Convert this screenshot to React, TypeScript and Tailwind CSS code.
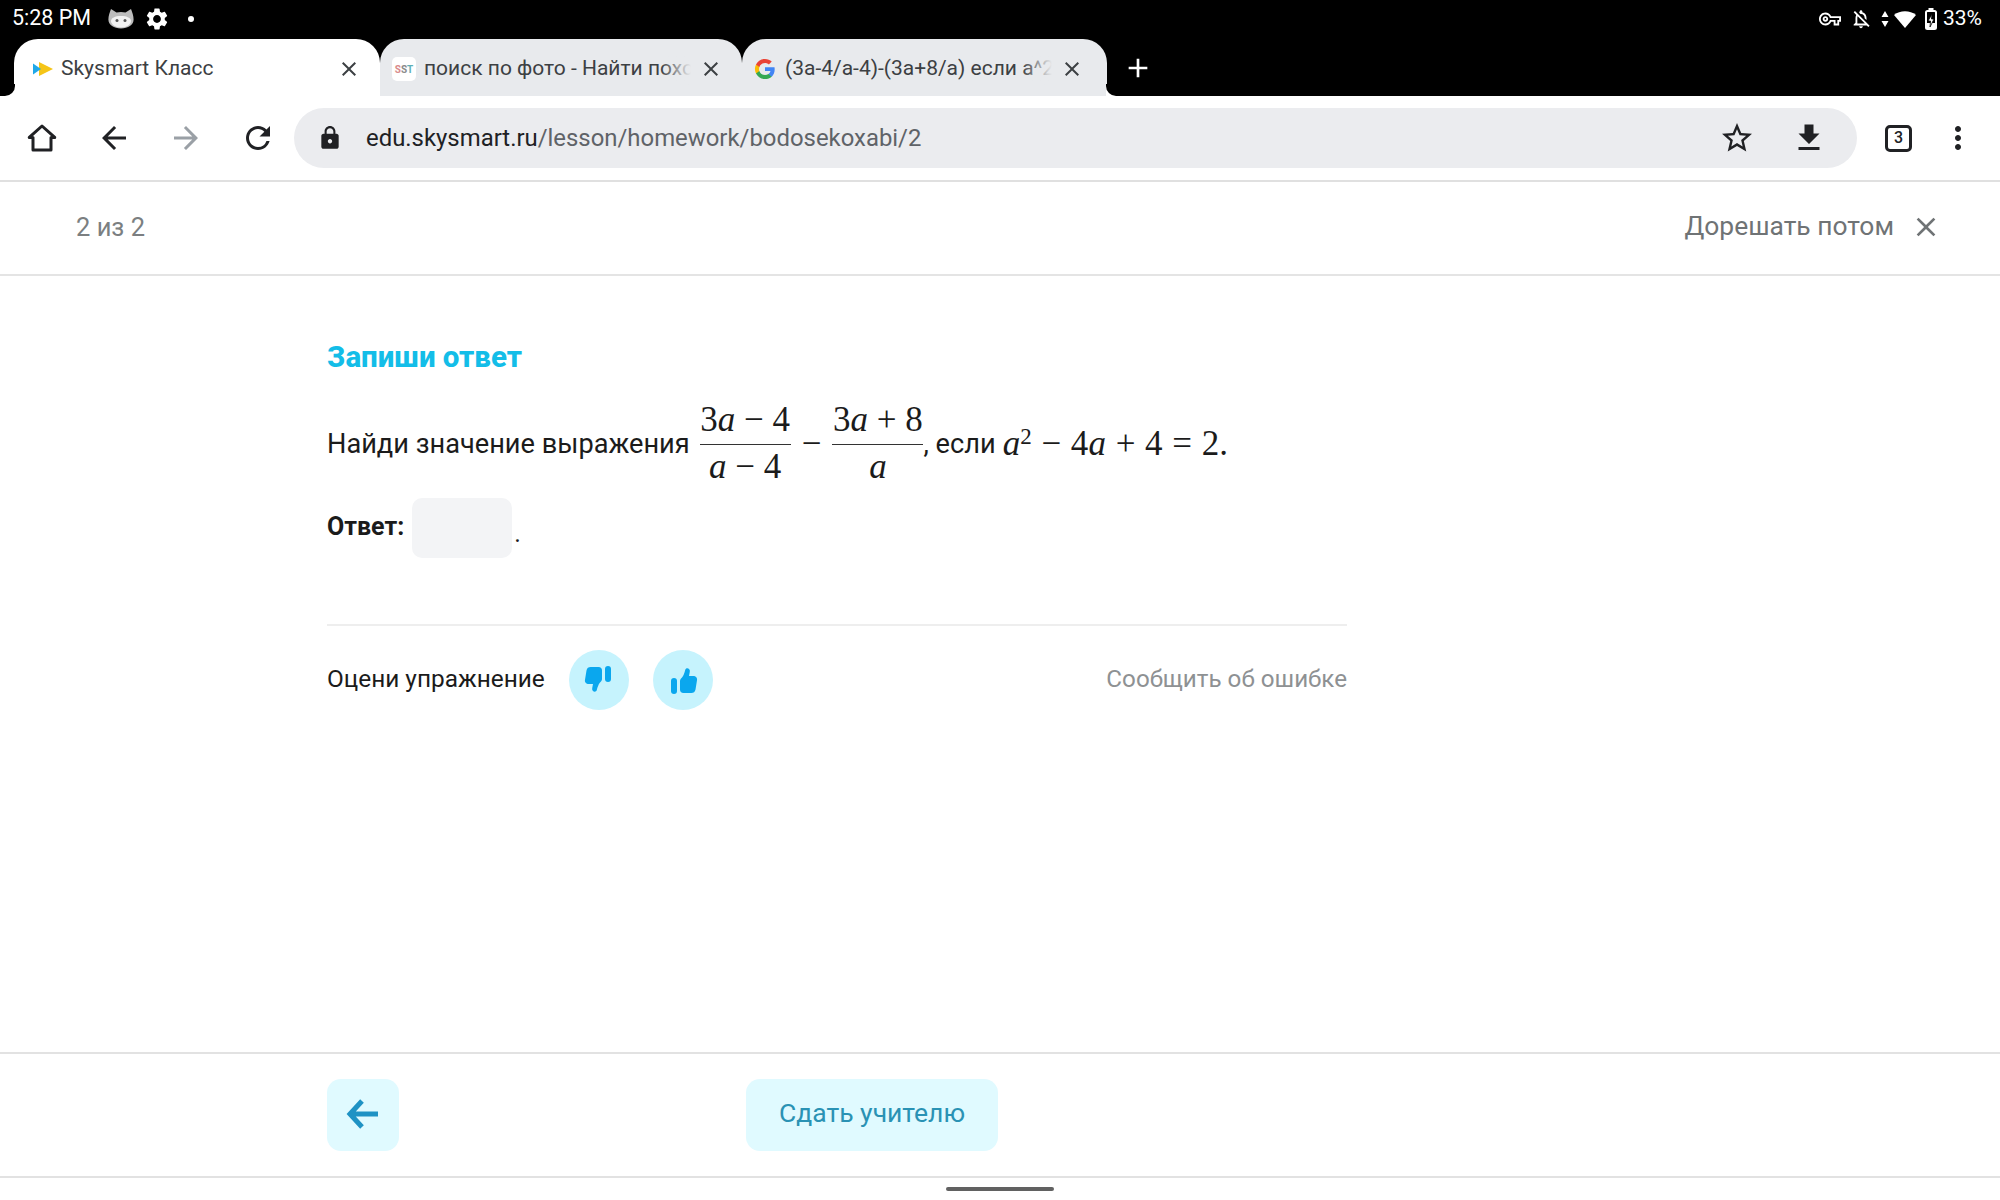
import React from "react";
import {
  MdSettings,
  MdOutlineVpnKey,
  MdOutlineNotificationsOff,
  MdClose,
  MdAdd,
  MdArrowBack,
  MdArrowForward,
  MdRefresh,
  MdLock,
  MdStarBorder,
  MdFileDownload,
  MdMoreVert,
} from "react-icons/md";

const sans = "font-['Roboto',sans-serif]";
const math = "font-['Liberation_Serif',serif]";

function Frac({ top, bottom, w }: { top: React.ReactNode; bottom: React.ReactNode; w: string }) {
  return (
    <span className={`inline-flex flex-col items-center ${w} ${math} text-[35px] leading-[44px] text-[#1b1b1b]`}>
      <span className="h-[44px] leading-[40px] whitespace-nowrap">{top}</span>
      <span className="w-full border-t border-[#333] h-0" />
      <span className="h-[44px] whitespace-nowrap">{bottom}</span>
    </span>
  );
}

const A = () => <i>a</i>;

function Thumb({ down }: { down?: boolean }) {
  return (
    <svg width="30" height="30" viewBox="0 0 30 30" fill="#0aa7ee" className={down ? "rotate-180" : ""}>
      <rect x="3" y="13" width="6" height="16" rx="3" />
      <path d="M12 16c0-1.500 1-2.500 2-3.500 1.600-2 2.400-4.500 3.200-7.500.6-2.800 5.300-2 4.600 1.800l-.8 4.200h4c3 0 4.500 2 4 4.300l-1.500 9.200c-.4 2.500-2 3.500-4.200 3.500H15.500c-2.300 0-3.500-1.200-3.500-3.500z" />
    </svg>
  );
}

function Flare({ side }: { side: "left" | "right" }) {
  return (
    <span
      className={`absolute bottom-0 w-[10px] h-[12px] bg-white ${side === "left" ? "left-[-9px]" : "right-[-9px]"}`}
    >
      <span
        className={`block w-full h-full bg-black ${side === "left" ? "rounded-br-[10px]" : "rounded-bl-[10px]"}`}
      />
    </span>
  );
}

function Tab({
  active,
  title,
  icon,
  width,
  pad,
  flare,
}: {
  active?: boolean;
  title: string;
  icon: React.ReactNode;
  width: string;
  pad: string;
  flare?: React.ReactNode;
}) {
  return (
    <div
      className={`relative flex items-center pt-[3px] h-[57px] ${width} ${pad} rounded-t-[24px] ${
        active ? "bg-white" : "bg-[#e8eaed]"
      }`}
    >
      {flare}
      <span className="w-[26px] h-[26px] shrink-0 flex items-center justify-center">{icon}</span>
      <span
        className={`relative flex-1 min-w-0 overflow-hidden whitespace-nowrap ${
          active ? "ml-[5px]" : "ml-[7px]"
        } text-[21px] text-[#3c4043]`}
      >
        {title}
        {!active && (
          <span className="absolute right-0 top-0 bottom-0 w-[30px] bg-gradient-to-r from-transparent to-[#e8eaed]" />
        )}
      </span>
      <MdClose className="shrink-0 ml-[8px] text-[#3c4043]" size={24} />
    </div>
  );
}

export default function App() {
  return (
    <div className={`w-[2000px] h-[1200px] bg-white flex flex-col overflow-hidden ${sans}`}>
      {/* status bar */}
      <div className="h-[39px] bg-black flex items-center justify-between pb-[2px] pl-[12px] pr-[18px] text-white shrink-0">
        <div className="flex items-center">
          <span className="text-[21.5px] font-normal">5:28 PM</span>
          <svg className="ml-[17px]" width="26" height="20" viewBox="0 0 26 20">
            <path d="M3 0l5.500 3.500c3-.8 6-.8 9 0L23 0c1.200 3 2.600 7 2.600 10.500 0 5.500-5.600 9-12.600 9S.4 16 .4 10.500C.4 7 1.800 3 3 0z" fill="#bdbdbd" />
            <path d="M3 12c0-3 4-5 10-5s10 2 10 5-4 6.500-10 6.500S3 15 3 12z" fill="#f2f2f2" />
            <circle cx="9" cy="11.500" r="1.500" fill="#555" />
            <circle cx="17" cy="11.500" r="1.500" fill="#555" />
          </svg>
          <MdSettings className="ml-[10px]" size={26} />
          <span className="ml-[18px] w-[6px] h-[6px] rounded-full bg-white" />
        </div>
        <div className="flex items-center">
          <MdOutlineVpnKey size={22} />
          <MdOutlineNotificationsOff className="ml-[9px]" size={22} />
          <svg className="ml-[9px]" width="8" height="20" viewBox="0 0 8 20">
            <path d="M4 2l3.500 6H.5zM4 18L.5 12h7z" fill="#fff" />
          </svg>
          <svg className="ml-[4px]" width="24" height="20" viewBox="0 0 24 20">
            <path d="M12 19L1 6c6-5 16-5 22 0z" fill="#fff" />
          </svg>
          <svg className="ml-[8px]" width="12" height="22" viewBox="0 0 12 22">
            <rect x="1" y="3" width="10" height="18" rx="1.500" fill="#000" stroke="#fff" strokeWidth="2" />
            <rect x="3.500" y="0" width="5" height="3" fill="#fff" />
            <path d="M1 15h10v6H1z" fill="#fff" />
            <path d="M7 6L3 13h2.500L5 19l4-8H6.500z" fill="#fff" stroke="#000" strokeWidth=".8" />
          </svg>
          <span className="ml-[6px] text-[21px]">33%</span>
        </div>
      </div>

      {/* tabs */}
      <div className="h-[57px] bg-black flex items-end pl-[14px] shrink-0">
        <Tab
          active
          width="w-[366px]"
          pad="pl-[16px] pr-[19px]"
          flare={<Flare side="left" />}
          title="Skysmart Класс"
          icon={
            <svg width="20" height="14" viewBox="0 0 20 14">
              <path d="M6 0l14 7-14 7z" fill="#f5c518" />
              <path d="M0 1.500l8 5.500-8 5.500z" fill="#1fa8e8" />
            </svg>
          }
        />
        <Tab
          width="w-[362px]"
          pad="pl-[11px] pr-[19px]"
          title="поиск по фото - Найти похо"
          icon={
            <span className="w-[24px] h-[24px] bg-white rounded-[5px] flex items-center justify-center text-[10px] font-bold">
              <span className="text-[#d98b8b]">S</span>
              <span className="text-[#8a8a8a]">S</span>
              <span className="text-[#5fb0b7]">T</span>
            </span>
          }
        />
        <Tab
          width="w-[365px]"
          pad="pl-[10px] pr-[23px]"
          flare={<Flare side="right" />}
          title="(3a-4/a-4)-(3a+8/a) если a^2"
          icon={
            <svg width="22" height="22" viewBox="0 0 24 24">
              <path fill="#4285F4" d="M22.560 12.250c0-.78-.07-1.530-.2-2.250H12v4.260h5.920c-.26 1.370-1.040 2.530-2.210 3.310v2.770h3.570c2.080-1.920 3.280-4.740 3.280-8.090z" />
              <path fill="#34A853" d="M12 23c2.970 0 5.460-.98 7.280-2.660l-3.570-2.770c-.98.660-2.230 1.060-3.710 1.060-2.860 0-5.290-1.930-6.160-4.530H2.180v2.840C3.990 20.530 7.700 23 12 23z" />
              <path fill="#FBBC05" d="M5.840 14.090c-.22-.66-.35-1.360-.35-2.090s.13-1.430.35-2.090V7.070H2.180C1.430 8.550 1 10.220 1 12s.43 3.450 1.180 4.930l3.660-2.840z" />
              <path fill="#EA4335" d="M12 5.380c1.620 0 3.060.56 4.210 1.640l3.150-3.150C17.450 2.090 14.970 1 12 1 7.700 1 3.990 3.470 2.180 7.070l3.660 2.840c.87-2.600 3.300-4.530 6.160-4.530z" />
            </svg>
          }
        />
        <MdAdd className="ml-[15px] mb-[12px] text-white" size={32} />
      </div>

      {/* toolbar */}
      <div className="h-[86px] flex items-center shrink-0 border-b-2 border-[#e0e0e0] pl-[24px] pr-[24px] text-[#202124]">
        <svg width="36" height="36" viewBox="0 0 24 24" fill="none" stroke="#202124" strokeWidth="2" strokeLinejoin="round">
          <path d="M12 4L3.500 11.600H6V20h12v-8.400h2.500z" />
        </svg>
        <MdArrowBack className="ml-[36px]" size={36} />
        <MdArrowForward className="ml-[36px] text-[#9aa0a6]" size={36} />
        <MdRefresh className="ml-[36px]" size={36} />
        <div className="ml-[18px] flex-1 h-[60px] rounded-full bg-[#ebecef] flex items-center pl-[23px] pr-[30px]">
          <MdLock size={26} />
          <span className="ml-[23px] pt-[2px] text-[23.900px] text-[#5f6368]">
            <span className="text-[#202124]">edu.skysmart.ru</span>/lesson/homework/bodosekoxabi/2
          </span>
          <MdStarBorder className="ml-auto" size={36} />
          <MdFileDownload className="ml-[36px]" size={36} />
        </div>
        <div className="ml-[28px] w-[27px] h-[27px] rounded-[5px] border-[3px] border-[#202124] flex items-center justify-center text-[16px] font-medium">
          3
        </div>
        <MdMoreVert className="ml-[28px]" size={36} />
      </div>

      {/* lesson header */}
      <div className="h-[94px] pb-[2px] shrink-0 flex items-center justify-between border-b-2 border-[#e4e4e4] pl-[76px] pr-[58px] text-[#6f7375]">
        <span className="text-[25.500px] text-[#7b7f81]">2 из 2</span>
        <div className="flex items-center">
          <span className="text-[26.400px]">Дорешать потом</span>
          <MdClose className="ml-[16px]" size={32} />
        </div>
      </div>

      {/* content */}
      <div className="flex-1 pl-[327px]">
        <div className="w-[1020px]">
          <h1 className="mt-[63px] text-[29.500px] leading-[36px] font-extrabold text-[#13bde8]">Запиши ответ</h1>
          <div className="mt-[25px] flex items-center text-[27.200px] text-[#1b1b1b]">
            <span>Найди значение выражения</span>
            <Frac w="w-[91px] ml-[10px]" top={<>3<A /> − 4</>} bottom={<><A /> − 4</>} />
            <span className={`mx-[11px] ${math} text-[35px]`}>−</span>
            <Frac w="w-[91px]" top={<>3<A /> + 8</>} bottom={<A />} />
            <span>, если</span>
            <span className={`ml-[7px] ${math} text-[35px] whitespace-nowrap [word-spacing:1px]`}>
              <A />
              <sup className="text-[23px]">2</sup> − 4<A /> + 4 = 2.
            </span>
          </div>
          <div className="mt-[9px] flex items-center h-[60px] text-[25px] text-[#1b1b1b]">
            <span className="font-bold pb-[2px]">Ответ:</span>
            <span className="ml-[8px] w-[100px] h-[60px] rounded-[10px] bg-[#f3f4f6]" />
            <span className="ml-[2px] self-end mb-[12px] leading-none">.</span>
          </div>
          <div className="mt-[66px] border-t-2 border-[#eeeeee] pb-[1px] flex items-center h-[110px]">
            <span className="text-[24.400px] text-[#1b1b1b]">Оцени упражнение</span>
            <span className="ml-[24px] w-[60px] h-[60px] rounded-full bg-[#c6f3fd] flex items-center justify-center">
              <Thumb down />
            </span>
            <span className="ml-[24px] w-[60px] h-[60px] rounded-full bg-[#c6f3fd] flex items-center justify-center">
              <Thumb />
            </span>
            <span className="ml-auto text-[24.200px] text-[#8e9193]">Сообщить об ошибке</span>
          </div>
        </div>
      </div>

      {/* footer */}
      <div className="h-[126px] shrink-0 border-t-2 border-b-2 border-[#e2e2e2] pl-[327px] flex items-center">
        <button className="w-[72px] h-[72px] pb-[3px] rounded-[14px] bg-[#e0faff] flex items-center justify-center">
          <svg width="34" height="32" viewBox="0 0 34 32" fill="none" stroke="#1f92c4" strokeWidth="5">
            <path d="M32 16H5M16 3L4 16l12 13" />
          </svg>
        </button>
        <button className="ml-[347px] w-[252px] h-[72px] pb-[4px] rounded-[14px] bg-[#e0faff] text-[26.500px] text-[#2a92b4]">
          Сдать учителю
        </button>
      </div>
      <div className="h-[22px] shrink-0 flex items-center justify-center">
        <span className="w-[108px] h-[4px] rounded-full bg-[#616161]" />
      </div>
    </div>
  );
}
